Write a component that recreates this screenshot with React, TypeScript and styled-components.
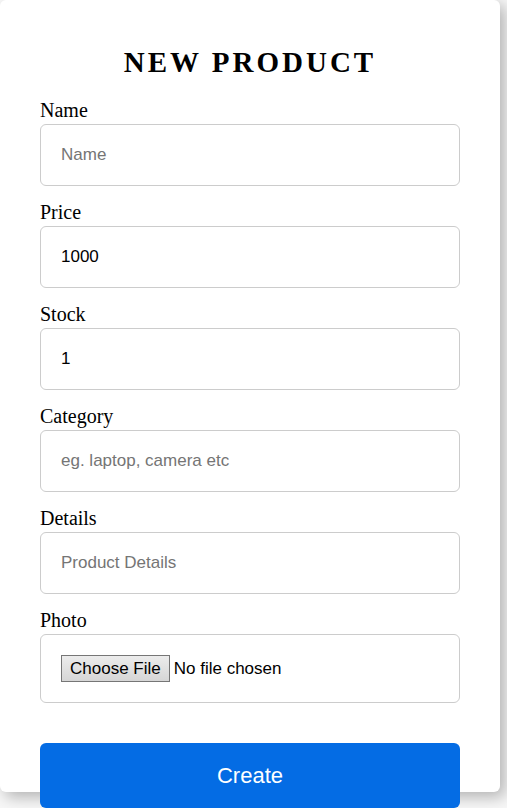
import React from "react";
import styled, { createGlobalStyle } from "styled-components";

const GlobalStyle = createGlobalStyle`
  * { box-sizing: border-box; margin: 0; padding: 0; }
  body {
    background: #f7f7f7;
    color: #000;
    font-family: "Liberation Serif", "Times New Roman", serif;
  }
`;

const Page = styled.main`
  height: 100vh;
  padding: 0 7px 16px 0;
  overflow: hidden;
`;

const Card = styled.article`
  height: 100%;
  padding: 42px 40px;
  border-radius: 6px;
  background: #fff;
  box-shadow: 5px 5px 15px rgba(0, 0, 0, 0.28);
`;

const Form = styled.form`
  display: flex;
  flex-direction: column;
  gap: 14px;
`;

const Title = styled.h2`
  margin-bottom: 2px;
  font-size: 29px;
  line-height: 40px;
  letter-spacing: 3px;
  text-align: center;
  text-transform: uppercase;
`;

const Field = styled.div`
  display: flex;
  flex-direction: column;
  gap: 2px;
`;

const Label = styled.label`
  font-size: 20px;
  line-height: 24px;
`;

const Input = styled.input`
  width: 100%;
  height: 62px;
  padding: 20px;
  border: 1px solid #ccc;
  border-radius: 6px;
  background: #fff;
  color: #000;
  font: 17px "Liberation Sans", Arial, sans-serif;
  outline: none;

  &::placeholder { color: #757575; }
`;

const FileInput = styled(Input)`
  height: 69px;

  &::file-selector-button {
    height: 27px;
    margin-right: 4px;
    padding: 0 8px;
    border: 1px solid #767676;
    background: linear-gradient(#ececec, #d6d6d6);
    color: #000;
    font: inherit;
  }
`;

const CreateButton = styled.button`
  height: 65px;
  margin-top: 26px;
  flex-shrink: 0;
  border: 0;
  border-radius: 6px;
  background: #046ce4;
  color: #fff;
  font: 22px "Liberation Sans", Arial, sans-serif;
  cursor: pointer;
`;

const fields = [
  { id: "name", label: "Name", type: "text", placeholder: "Name" },
  { id: "price", label: "Price", type: "number", value: 1000 },
  { id: "stock", label: "Stock", type: "number", value: 1 },
  { id: "category", label: "Category", type: "text", placeholder: "eg. laptop, camera etc" },
  { id: "details", label: "Details", type: "text", placeholder: "Product Details" },
];

export default function App() {
  return (
    <Page>
      <GlobalStyle />
      <Card>
        <Form onSubmit={(event) => event.preventDefault()}>
          <Title>New Product</Title>
          {fields.map(({ id, label, type, placeholder, value }) => (
            <Field key={id}>
              <Label htmlFor={id}>{label}</Label>
              <Input id={id} type={type} placeholder={placeholder} defaultValue={value} />
            </Field>
          ))}
          <Field>
            <Label htmlFor="photo">Photo</Label>
            <FileInput id="photo" type="file" />
          </Field>
          <CreateButton type="submit">Create</CreateButton>
        </Form>
      </Card>
    </Page>
  );
}
